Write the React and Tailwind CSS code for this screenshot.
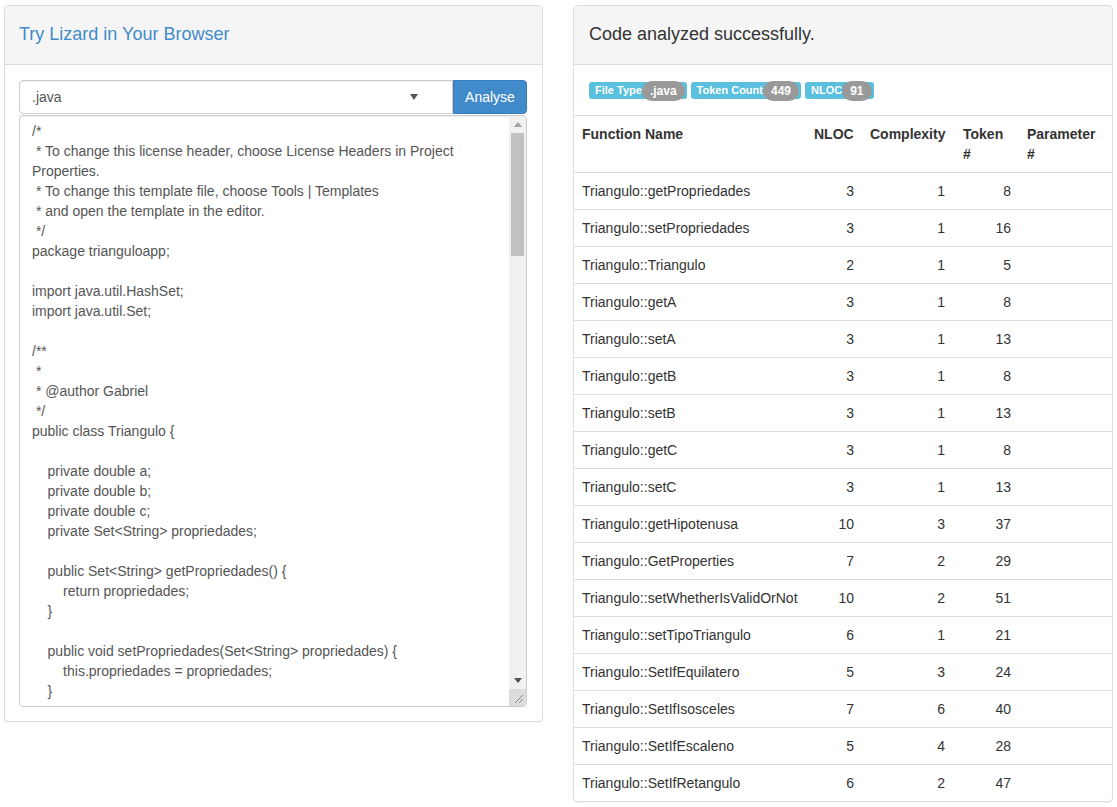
import React from "react";

const code = [
  "/*",
  " * To change this license header, choose License Headers in Project",
  "Properties.",
  " * To change this template file, choose Tools | Templates",
  " * and open the template in the editor.",
  " */",
  "package trianguloapp;",
  "",
  "import java.util.HashSet;",
  "import java.util.Set;",
  "",
  "/**",
  " *",
  " * @author Gabriel",
  " */",
  "public class Triangulo {",
  "",
  "    private double a;",
  "    private double b;",
  "    private double c;",
  "    private Set<String> propriedades;",
  "",
  "    public Set<String> getPropriedades() {",
  "        return propriedades;",
  "    }",
  "",
  "    public void setPropriedades(Set<String> propriedades) {",
  "        this.propriedades = propriedades;",
  "    }",
];

const rows = [
  ["getPropriedades", 3, 1, 8],
  ["setPropriedades", 3, 1, 16],
  ["Triangulo", 2, 1, 5],
  ["getA", 3, 1, 8],
  ["setA", 3, 1, 13],
  ["getB", 3, 1, 8],
  ["setB", 3, 1, 13],
  ["getC", 3, 1, 8],
  ["setC", 3, 1, 13],
  ["getHipotenusa", 10, 3, 37],
  ["GetProperties", 7, 2, 29],
  ["setWhetherIsValidOrNot", 10, 2, 51],
  ["setTipoTriangulo", 6, 1, 21],
  ["SetIfEquilatero", 5, 3, 24],
  ["SetIfIsosceles", 7, 6, 40],
  ["SetIfEscaleno", 5, 4, 28],
  ["SetIfRetangulo", 6, 2, 47],
];

function Label({ text, badge }) {
  return (
    <span className="inline-flex items-center h-[17px] bg-[#5bc0de] text-white text-[11px] font-bold rounded-[3px] pl-[6px] pr-[2px] leading-none">
      <span>{text}</span>
      <span className="bg-[#999] text-white text-[12px] font-bold rounded-[10px] px-[8px] h-[20px] inline-flex items-center">
        {badge}
      </span>
    </span>
  );
}

export default function App() {
  return (
    <div
      className="min-h-screen bg-white text-[#333] text-[14px] leading-5 pl-[4px] pr-[5px] pt-[5px]"
      style={{ fontFamily: '"Liberation Sans", Arial, Helvetica, sans-serif' }}
    >
      <div className="flex items-start gap-[30px]">
        {/* Left panel */}
        <div className="w-[539px] shrink-0 border border-[#ddd] rounded-[4px] bg-white shadow-[0_1px_1px_rgba(0,0,0,0.05)]">
          <div className="h-[59px] bg-[#f5f5f5] border-b border-[#ddd] rounded-t-[4px] px-[14px] flex items-center">
            <h3 className="text-[18px] text-[#428bca] leading-5 pb-[3px]">Try Lizard in Your Browser</h3>
          </div>
          <div className="pl-[14px] pr-[15px] pb-[14px] pt-[15px]">
            <div className="flex h-[34px]">
              <div className="flex-1 flex items-center justify-between border border-[#ccc] rounded-l-[4px] pl-[12px] pr-[34px] text-[#555] shadow-[inset_0_1px_1px_rgba(0,0,0,0.075)]">
                <span>.java</span>
                <svg width="8" height="6" viewBox="0 0 8 6">
                  <path d="M0 0 H8 L4 6 Z" fill="#555" />
                </svg>
              </div>
              <button className="w-[74px] bg-[#428bca] border border-[#357ebd] text-white rounded-r-[4px] text-[14px]">
                Analyse
              </button>
            </div>
            <div className="mt-px h-[592px] flex border border-[#ccc] rounded-[4px] shadow-[inset_0_1px_1px_rgba(0,0,0,0.075)] overflow-hidden">
              <div className="flex-1 overflow-hidden px-[12px] pt-[5px] text-[#555] whitespace-pre">
                {code.map((l, i) => (
                  <div key={i} className="h-5">
                    {l}
                  </div>
                ))}
              </div>
              <div className="w-[17px] flex flex-col bg-[#f1f1f1]">
                <div className="h-[17px] flex items-center justify-center">
                  <svg width="8" height="5" viewBox="0 0 8 5">
                    <path d="M0 5 H8 L4 0 Z" fill="#a3a3a3" />
                  </svg>
                </div>
                <div className="flex-1 flex flex-col">
                  <div className="mx-[2px] h-[123px] bg-[#c1c1c1]" />
                  <div className="flex-1" />
                </div>
                <div className="h-[17px] flex items-center justify-center">
                  <svg width="8" height="5" viewBox="0 0 8 5">
                    <path d="M0 0 H8 L4 5 Z" fill="#505050" />
                  </svg>
                </div>
                <div className="h-[17px] bg-[#dcdcdc] flex items-end justify-end">
                  <svg width="17" height="17" viewBox="0 0 17 17">
                    <path d="M14 6 L6 14 M14 10 L10 14" stroke="#888" strokeWidth="1" />
                  </svg>
                </div>
              </div>
            </div>
          </div>
        </div>

        {/* Right panel */}
        <div className="w-[540px] shrink-0 border border-[#ddd] rounded-[4px] bg-white shadow-[0_1px_1px_rgba(0,0,0,0.05)] overflow-hidden">
          <div className="h-[59px] bg-[#f5f5f5] border-b border-[#ddd] px-[15px] flex items-center">
            <h3 className="text-[18px] text-[#333] leading-5 pb-[3px]">Code analyzed successfully.</h3>
          </div>
          <div className="px-[15px] h-[50px] flex items-center gap-[4px] pt-[1px]">
            <Label text="File Type" badge=".java" />
            <Label text="Token Count" badge="449" />
            <Label text="NLOC" badge="91" />
          </div>
          <table className="w-full table-fixed border-collapse">
            <colgroup>
              <col className="w-[232px]" />
              <col className="w-[56px]" />
              <col className="w-[93px]" />
              <col className="w-[64px]" />
              <col />
            </colgroup>
            <thead>
              <tr className="border-t border-b border-[#ddd]">
                <th className="text-left align-top font-bold p-2">Function Name</th>
                <th className="text-left align-top font-bold p-2">NLOC</th>
                <th className="text-left align-top font-bold p-2">Complexity</th>
                <th className="text-left align-top font-bold p-2">Token #</th>
                <th className="text-left align-top font-bold p-2">Parameter #</th>
              </tr>
            </thead>
            <tbody>
              {rows.map((r, i) => (
                <tr key={i} className="border-t border-[#ddd]">
                  <td className="p-2 whitespace-nowrap">Triangulo::{r[0]}</td>
                  <td className="p-2 text-right">{r[1]}</td>
                  <td className="py-2 pl-2 pr-[10px] text-right">{r[2]}</td>
                  <td className="p-2 text-right">{r[3]}</td>
                  <td className="p-2"></td>
                </tr>
              ))}
            </tbody>
          </table>
        </div>
      </div>
    </div>
  );
}
